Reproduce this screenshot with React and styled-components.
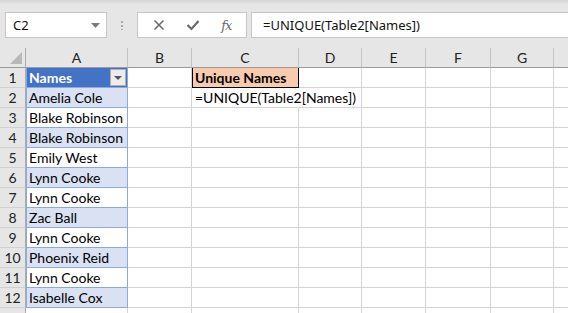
import React from "react";
import styled, { createGlobalStyle } from "styled-components";

const cols = [
  { key: "A", width: 102 },
  { key: "B", width: 64 },
  { key: "C", width: 107 },
  { key: "D", width: 63 },
  { key: "E", width: 64 },
  { key: "F", width: 65 },
  { key: "G", width: 63 },
  { key: "", width: 40 },
];

const names = [
  "Amelia Cole",
  "Blake Robinson",
  "Blake Robinson",
  "Emily West",
  "Lynn Cooke",
  "Lynn Cooke",
  "Zac Ball",
  "Lynn Cooke",
  "Phoenix Reid",
  "Lynn Cooke",
  "Isabelle Cox",
];

const GlobalStyle = createGlobalStyle`
  body {
    margin: 0;
    background: #fff;
    overflow: hidden;
    font-family: "Lato", "Liberation Sans", sans-serif;
  }
`;

const Window = styled.div`
  width: 568px;
  height: 313px;
  overflow: hidden;
  background: #fff;
`;

const FormulaBar = styled.div`
  height: 48px;
  display: flex;
  align-items: flex-start;
  padding-top: 12px;
  box-sizing: border-box;
  background: linear-gradient(#d4d4d4, #e6e6e6 5px);
`;

const Box = styled.div`
  height: 26px;
  box-sizing: border-box;
  background: #fff;
  border: 1px solid #c6c6c6;
  display: flex;
  align-items: center;
  font-family: "Noto Sans", "Liberation Sans", sans-serif;
  font-size: 13px;
  color: #111;
`;

const NameBox = styled(Box)`
  margin-left: 5px;
  width: 102px;
  padding: 0 6px 0 7px;
  justify-content: space-between;
`;

const Grip = styled.div`
  width: 2px;
  height: 10px;
  margin: 8px 14px 0 14px;
  background: radial-gradient(circle, #a8a8a8 1px, transparent 1.2px) 0 0 / 2px 4px;
`;

const ButtonBox = styled(Box)`
  width: 110px;
  justify-content: space-around;
  padding: 0 4px;
`;

const Fx = styled.span`
  font-family: "DejaVu Serif", "Liberation Serif", serif;
  font-style: italic;
  font-size: 13px;
  color: #6a6a6a;
  letter-spacing: -1px;
`;

const FormulaInput = styled(Box)`
  flex: 1;
  margin-left: 4px;
  border-right: none;
  padding-left: 11px;
`;

const Sheet = styled.div`
  display: grid;
  grid-template-columns: 26px ${cols.map((c) => c.width + "px").join(" ")};
  grid-auto-rows: 20px;
  font-size: 14px;
  color: #000;
`;

const Corner = styled.div`
  background: #e6e6e6;
  border-right: 1px solid #ababab;
  border-bottom: 1px solid #9b9b9b;
  box-sizing: border-box;
  position: relative;
  &::after {
    content: "";
    position: absolute;
    right: 3px;
    bottom: 3px;
    border-style: solid;
    border-width: 0 0 12px 12px;
    border-color: transparent transparent #b8b8b8 transparent;
  }
`;

const ColHead = styled.div`
  background: #e6e6e6;
  border-right: 1px solid #c4c4c4;
  border-bottom: 1px solid #9b9b9b;
  box-sizing: border-box;
  display: flex;
  align-items: center;
  justify-content: center;
  color: #222;
  font-size: 14px;
`;

const RowHead = styled.div`
  background: #e6e6e6;
  border-right: 1px solid #ababab;
  border-bottom: 1px solid #d0d0d0;
  box-sizing: border-box;
  display: flex;
  align-items: center;
  justify-content: center;
  color: #222;
  font-size: 14px;
`;

const Cell = styled.div`
  box-sizing: border-box;
  border-right: 1px solid ${(p) => (p.$spill ? "transparent" : "#d4d4d4")};
  border-bottom: 1px solid #d4d4d4;
  display: flex;
  align-items: center;
  padding-left: 3px;
  white-space: nowrap;
  overflow: visible;
  position: relative;
  z-index: ${(p) => (p.$spill ? 1 : 0)};
`;

const TableCell = styled(Cell)`
  background: ${(p) => (p.$band ? "#d9e1f2" : "#fff")};
  border-right-color: #8ea9db;
  border-bottom-color: #8ea9db;
  box-shadow: inset 1px 0 0 #8ea9db;
`;

const TableHeader = styled(TableCell)`
  background: #4472c4;
  color: #fff;
  font-weight: 700;
  justify-content: space-between;
  padding-right: 1px;
`;

const FilterButton = styled.div`
  width: 16px;
  height: 17px;
  box-sizing: border-box;
  background: #ececec;
  border: 1px solid #b0b0b0;
  display: flex;
  align-items: center;
  justify-content: center;
  &::after {
    content: "";
    border-style: solid;
    border-width: 4px 4px 0 4px;
    border-color: #555 transparent transparent transparent;
  }
`;

const HeadingCell = styled(Cell)`
  background: #f8cbad;
  font-weight: 700;
  border-right-color: #000;
  border-bottom-color: #000;
  box-shadow: inset 1px 0 0 #000;
`;

const Caret = () => (
  <svg width="9" height="5" viewBox="0 0 9 5">
    <path d="M0 0h9L4.5 5z" fill="#7a7a7a" />
  </svg>
);

const CancelIcon = () => (
  <svg width="12" height="12" viewBox="0 0 12 12">
    <path d="M1.5 1.5l9 9M10.5 1.5l-9 9" stroke="#6a6a6a" strokeWidth="1.5" />
  </svg>
);

const CheckIcon = () => (
  <svg width="14" height="12" viewBox="0 0 14 12">
    <path d="M1.5 6l4 4 7-8" stroke="#6a6a6a" strokeWidth="2.2" fill="none" />
  </svg>
);

// row 13 is only a sliver at the bottom edge, its number falls outside the window
const visibleLabel = (n) => (n <= 12 ? n : "");

const renderRow = (n) => {
  const name = names[n - 2];
  const cells = cols.map((c) => {
    const id = c.key + n;
    if (c.key === "A") {
      if (n === 1)
        return (
          <TableHeader key={id}>
            Names
            <FilterButton />
          </TableHeader>
        );
      if (name) return <TableCell key={id} $band={n % 2 === 0}>{name}</TableCell>;
    }
    if (id === "C1") return <HeadingCell key={id}>Unique Names</HeadingCell>;
    if (id === "C2")
      return (
        <Cell key={id} $spill>
          =UNIQUE(Table2[Names])
        </Cell>
      );
    return <Cell key={id} />;
  });
  return [<RowHead key={"r" + n}>{visibleLabel(n)}</RowHead>, ...cells];
};

const rows = Array.from({ length: 13 }, (_, i) => i + 1);

export default function App() {
  return (
    <Window>
      <GlobalStyle />
      <FormulaBar>
        <NameBox>
          C2
          <Caret />
        </NameBox>
        <Grip />
        <ButtonBox>
          <CancelIcon />
          <CheckIcon />
          <Fx>fx</Fx>
        </ButtonBox>
        <FormulaInput>=UNIQUE(Table2[Names])</FormulaInput>
      </FormulaBar>
      <Sheet>
        <Corner />
        {cols.map((c, i) => (
          <ColHead key={"h" + i}>{c.key}</ColHead>
        ))}
        {rows.map(renderRow)}
      </Sheet>
    </Window>
  );
}
